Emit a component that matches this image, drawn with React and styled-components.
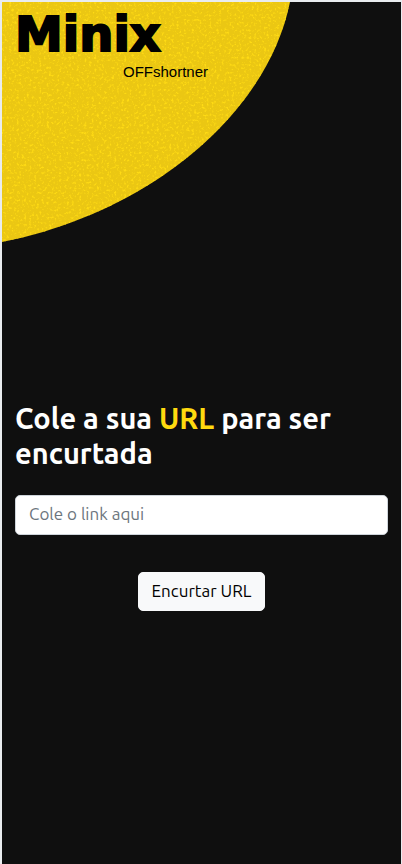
import React from "react";
import styled, { createGlobalStyle } from "styled-components";

const GlobalStyle = createGlobalStyle`
  *, *::before, *::after { box-sizing: border-box; }
  body {
    margin: 0;
    background: #0f0f0f;
    font-family: Ubuntu, "Noto Sans", sans-serif;
    font-size: 17px;
    line-height: 24px;
  }
`;

const Page = styled.div`
  position: relative;
  display: flex;
  flex-direction: column;
  min-height: 100vh;
  overflow: hidden;
  background: #0f0f0f;
  border: solid #e9ecef;
  border-width: 2px 1px 0 2px;
`;

const Backdrop = styled.svg`
  position: absolute;
  top: 0;
  left: 0;
  width: 290px;
  height: 242px;
`;

const Brand = styled.header`
  position: relative;
  align-self: flex-start;
  display: flex;
  flex-direction: column;
  padding: 8px 13px;
  color: #000;
`;

const BrandName = styled.span`
  font: 700 48px/48px "DejaVu Sans", sans-serif;
  -webkit-text-stroke: 2px #000;
`;

const BrandTagline = styled.span`
  padding: 4px 0 0 108px;
  font: 15px/20px "Liberation Sans", Arial, sans-serif;
`;

const Main = styled.main`
  position: relative;
  flex: 1;
  display: flex;
  flex-direction: column;
  justify-content: center;
  padding: 58px 13px 0;
`;

const Form = styled.form`
  display: flex;
  flex-direction: column;
  align-items: center;
`;

const Title = styled.h1`
  width: 100%;
  margin: 0 0 24px;
  color: #fff;
  font-size: 29px;
  font-weight: 600;
  line-height: 35px;
`;

const Accent = styled.span`
  color: #ffda0f;
`;

const LinkInput = styled.input`
  width: 100%;
  height: 40px;
  margin-bottom: 37px;
  padding: 5px 13px 8px;
  border: 1px solid #ced4da;
  border-radius: 5px;
  background: #fff;
  color: #212529;
  font: inherit;
  &::placeholder { color: #6c757d; opacity: 1; }
`;

const SubmitButton = styled.button`
  height: 39px;
  padding: 0 13px 2px;
  border: 1px solid #f8f9fa;
  border-radius: 5px;
  background: #f8f9fa;
  color: #000;
  font: inherit;
  cursor: pointer;
`;

export default function App() {
  return (
    <>
      <GlobalStyle />
      <Page>
        <Backdrop viewBox="0 0 290 242" aria-hidden="true">
          <defs>
            <filter id="grain" x="0" y="0" width="100%" height="100%" colorInterpolationFilters="sRGB">
              <feTurbulence type="fractalNoise" baseFrequency="0.4" numOctaves="2" seed="4" />
              <feColorMatrix values="0 0 0 0 1  0 0 0 0 0.86  0 0 0 0 0.08  4 0 0 0 -2.1" />
              <feComposite in2="SourceGraphic" operator="in" result="specks" />
              <feMerge>
                <feMergeNode in="SourceGraphic" />
                <feMergeNode in="specks" />
              </feMerge>
            </filter>
          </defs>
          <path d="M0 0H288C266 110 150 210 0 240Z" fill="#ebc713" filter="url(#grain)" />
        </Backdrop>
        <Brand>
          <BrandName>Minix</BrandName>
          <BrandTagline>OFFshortner</BrandTagline>
        </Brand>
        <Main>
          <Form onSubmit={(event) => event.preventDefault()}>
            <Title>
              Cole a sua <Accent>URL</Accent> para ser encurtada
            </Title>
            <LinkInput type="url" aria-label="Cole o link aqui" placeholder="Cole o link aqui" />
            <SubmitButton type="submit">Encurtar URL</SubmitButton>
          </Form>
        </Main>
      </Page>
    </>
  );
}
